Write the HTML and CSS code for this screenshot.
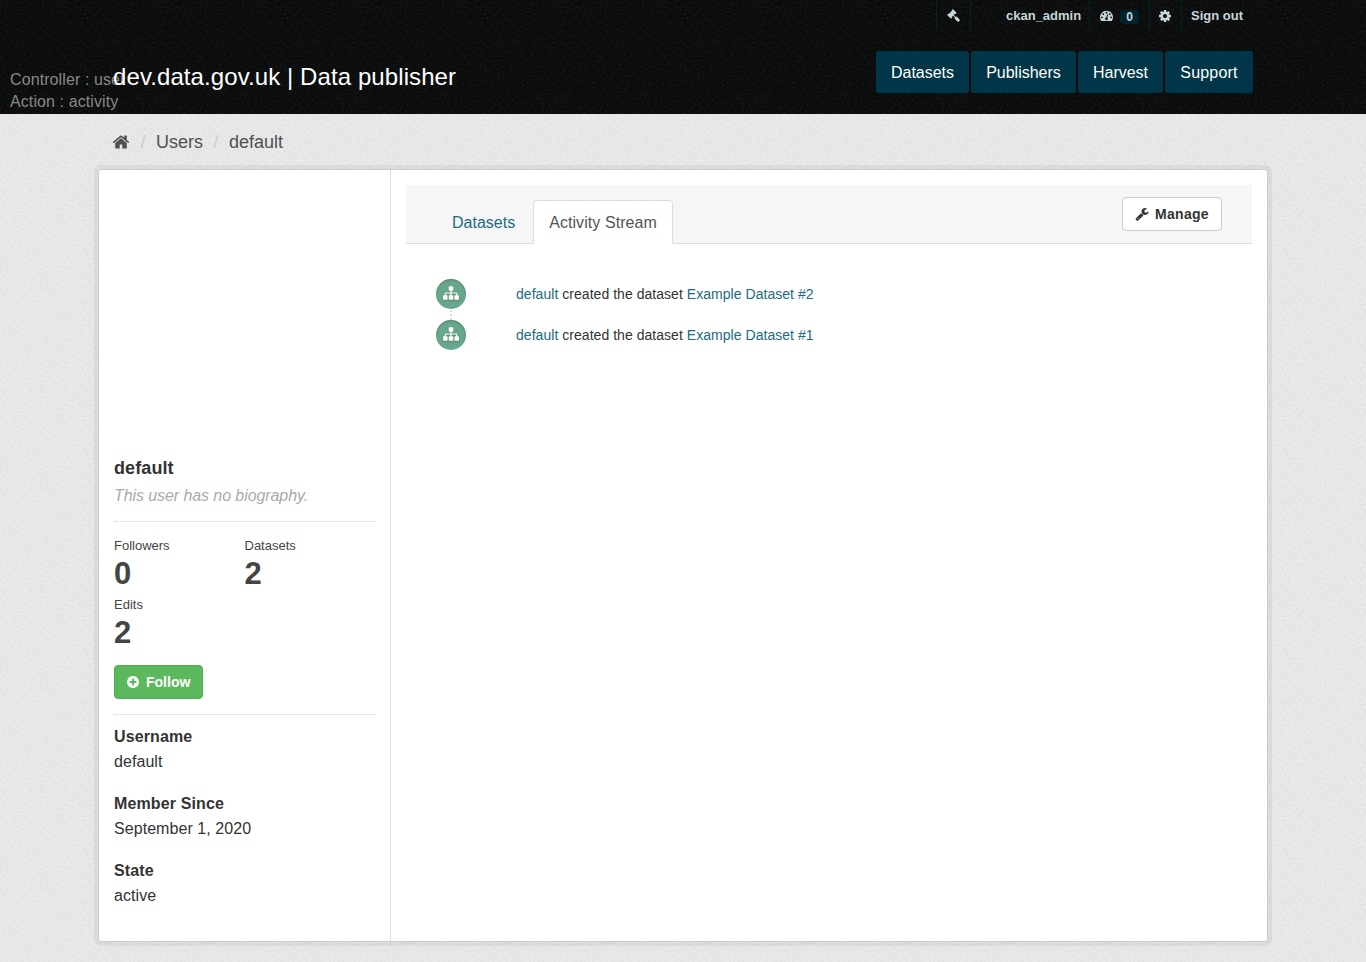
FILE: index.html
```
<!DOCTYPE html>
<html lang="en">
<head>
<meta charset="utf-8">
<title>default - Users - Data publisher</title>
<link rel="stylesheet" href="styles.css">
</head>
<body>
<svg class="sprite" width="0" height="0">
  <symbol id="home" viewBox="0 0 1792 1792"><path d="M1472 992v480q0 26-19 45t-45 19h-384v-384h-256v384h-384q-26 0-45-19t-19-45v-480q0-1 .5-3t.5-3l575-474 575 474q1 2 1 6zm223-69l-62 74q-8 9-21 11h-3q-13 0-21-7l-692-577-692 577q-12 8-24 7-13-2-21-11l-62-74q-8-10-7-23.500t11-21.500l719-599q32-26 76-26t76 26l244 204v-195q0-14 9-23t23-9h192q14 0 23 9t9 23v408l219 182q10 8 11 21.500t-7 23.500z"/></symbol>
  <symbol id="plus" viewBox="0 0 1792 1792"><path d="M1344 960v-128q0-26-19-45t-45-19h-256v-256q0-26-19-45t-45-19h-128q-26 0-45 19t-19 45v256h-256q-26 0-45 19t-19 45v128q0 26 19 45t45 19h256v256q0 26 19 45t45 19h128q26 0 45-19t19-45v-256h256q26 0 45-19t19-45zm320-64q0 209-103 385.500t-279.500 279.500-385.500 103-385.500-103-279.500-279.500-103-385.500 103-385.500 279.500-279.500 385.500-103 385.500 103 279.500 279.500 103 385.500z"/></symbol>
  <symbol id="cog" viewBox="0 0 1792 1792"><path d="M1152 896q0-106-75-181t-181-75-181 75-75 181 75 181 181 75 181-75 75-181zm512-109v222q0 12-8 23t-20 13l-185 28q-19 54-39 91 35 50 107 138 10 12 10 25t-9 23q-27 37-99 108t-94 71q-12 0-26-9l-138-108q-44 23-91 38-16 136-29 186-7 28-36 28h-222q-14 0-24.500-8.500t-11.500-21.500l-28-184q-49-16-90-37l-141 107q-10 9-25 9-14 0-25-11-126-114-165-168-7-10-7-23 0-12 8-23 15-21 51-66.500t54-70.500q-27-50-41-99l-183-27q-13-2-21-12.500t-8-23.500v-222q0-12 8-23t19-13l186-28q14-46 39-92-40-57-107-138-10-12-10-24 0-10 9-23 26-36 98.500-107.500t94.500-71.500q13 0 26 10l138 107q44-23 91-38 16-136 29-186 7-28 36-28h222q14 0 24.500 8.500t11.500 21.500l28 184q49 16 90 37l142-107q9-9 24-9 13 0 25 10 129 119 165 170 7 8 7 22 0 12-8 23-15 21-51 66.500t-54 70.500q26 50 41 98l183 28q13 2 21 12.500t8 23.500z"/></symbol>
  <symbol id="wrench" viewBox="0 0 1792 1792"><path d="M448 1472q0-26-19-45t-45-19-45 19-19 45 19 45 45 19 45-19 19-45zm644-420l-682 682q-37 37-90 37-52 0-91-37l-106-108q-38-36-38-90 0-53 38-91l681-681q39 98 114.500 173.500t173.500 114.500zm634-435q0 39-23 106-47 134-164.500 217.500t-258.500 83.500q-185 0-316.500-131.500t-131.500-316.500 131.500-316.500 316.500-131.500q58 0 121.500 16.500t107.500 46.500q16 11 16 28t-16 28l-293 169v224l193 107q5-3 79-48.500t135.500-81 70.500-35.500q15 0 23.500 10t8.500 25z"/></symbol>
  <symbol id="sitemap" viewBox="0 0 1792 1792"><path d="M1792 1248v320q0 40-28 68t-68 28h-320q-40 0-68-28t-28-68v-320q0-40 28-68t68-28h96v-192h-512v192h96q40 0 68 28t28 68v320q0 40-28 68t-68 28h-320q-40 0-68-28t-28-68v-320q0-40 28-68t68-28h96v-192h-512v192h96q40 0 68 28t28 68v320q0 40-28 68t-68 28h-320q-40 0-68-28t-28-68v-320q0-40 28-68t68-28h96v-192q0-52 38-90t90-38h512v-192h-96q-40 0-68-28t-28-68v-320q0-40 28-68t68-28h320q40 0 68 28t28 68v320q0 40-28 68t-68 28h-96v192h512q52 0 90 38t38 90v192h96q40 0 68 28t28 68z"/></symbol>
  <symbol id="dashboard" viewBox="0 0 1792 1792"><path d="M384 1152q0-53-37.500-90.500t-90.500-37.500-90.500 37.500-37.500 90.500 37.500 90.500 90.500 37.500 90.500-37.500 37.500-90.500zm192-448q0-53-37.500-90.500t-90.500-37.500-90.500 37.500-37.500 90.500 37.500 90.500 90.500 37.500 90.500-37.500 37.500-90.500zm428 481l101-382q6-26-7.500-48.500t-38.500-29.500-48 6.500-30 39.500l-101 382q-60 5-107 43.500t-63 98.500q-20 77 20 146t117 89 146-20 89-117q16-60-6-117t-72-91zm660-33q0-53-37.500-90.500t-90.500-37.500-90.500 37.500-37.500 90.500 37.500 90.500 90.500 37.500 90.500-37.500 37.500-90.500zm-640-640q0-53-37.500-90.500t-90.500-37.500-90.500 37.500-37.500 90.500 37.500 90.500 90.500 37.500 90.500-37.500 37.500-90.500zm448 192q0-53-37.500-90.500t-90.500-37.500-90.500 37.500-37.500 90.500 37.500 90.500 90.500 37.500 90.500-37.500 37.500-90.500zm320 448q0 261-141 483-19 29-54 29h-1402q-35 0-54-29-141-221-141-483 0-182 71-348t191-286 286-191 348-71 348 71 286 191 191 286 71 348z"/></symbol>
  <symbol id="gavel" viewBox="0 0 1792 1792"><path d="M1771 1536q0 53-37 90l-107 108q-39 37-91 37-53 0-90-37l-363-364q-38-36-38-90 0-53 43-96l-256-256-126 126q-14 14-34 14t-34-14q2 2 12.500 12t12.500 13 10 11.500 10 13.500 6 13.500 5.500 16.500 1.500 18q0 38-28 68-3 3-16.500 18t-19 20.500-18.500 16.500-22 15.500-22 9-26 4.500q-40 0-68-28l-408-408q-28-28-28-68 0-13 4.500-26t9-22 15.500-22 16.500-18.500 20.500-19 18-16.500q30-28 68-28 10 0 18 1.500t16.500 5.500 13.500 6 13.500 10 11.500 10 13 12.500 12 12.500q-14-14-14-34t14-34l348-348q14-14 34-14t34 14q-2-2-12.500-12t-12.500-13-10-11.500-10-13.500-6-13.500-5.500-16.500-1.500-18q0-38 28-68 3-3 16.500-18t19-20.500 18.500-16.500 22-15.500 22-9 26-4.500q40 0 68 28l408 408q28 28 28 68 0 13-4.500 26t-9 22-15.500 22-16.500 18.500-20.500 19-18 16.500q-30 28-68 28-10 0-18-1.500t-16.500-5.500-13.500-6-13.500-10-11.500-10-13-12.500-12-12.500q14 14 14 34t-14 34l-126 126 256 256q43-43 96-43 52 0 91 37l363 363q37 39 37 91z"/></symbol>
</svg>

<header class="masthead">
  <div class="debug">Controller : user<br>Action : activity</div>
  <div class="container">
    <ul class="account">
      <li class="acc-admin"><svg class="icon"><use href="#gavel"/></svg></li>
      <li class="acc-user">ckan_admin</li>
      <li class="acc-dash"><svg class="icon"><use href="#dashboard"/></svg><span class="badge">0</span></li>
      <li class="acc-cog"><svg class="icon"><use href="#cog"/></svg></li>
      <li class="acc-out">Sign out</li>
    </ul>
    <div class="brand-row">
      <h1 class="brand">dev.data.gov.uk | Data publisher</h1>
      <nav class="nav">
        <a class="nav-datasets">Datasets</a>
        <a class="nav-publishers">Publishers</a>
        <a class="nav-harvest">Harvest</a>
        <a class="nav-support">Support</a>
      </nav>
    </div>
  </div>
</header>

<main class="container">
  <div class="breadcrumb">
    <svg class="icon"><use href="#home"/></svg><span class="sep">/</span><a>Users</a><span class="sep">/</span><a>default</a>
  </div>
  <div class="wrapper">
    <aside class="sidebar">
      <div class="avatar"></div>
      <h2 class="name">default</h2>
      <p class="bio">This user has no biography.</p>
      <div class="stats">
        <dl><dt>Followers</dt><dd>0</dd></dl>
        <dl><dt>Datasets</dt><dd>2</dd></dl>
        <dl><dt>Edits</dt><dd>2</dd></dl>
      </div>
      <a class="btn follow"><svg class="icon"><use href="#plus"/></svg><span>Follow</span></a>
      <div class="info">
        <dl><dt>Username</dt><dd>default</dd></dl>
        <dl><dt>Member Since</dt><dd>September 1, 2020</dd></dl>
        <dl><dt>State</dt><dd>active</dd></dl>
      </div>
    </aside>
    <section class="primary">
      <div class="page-header">
        <div class="tabs"><a class="tab">Datasets</a><a class="tab active">Activity Stream</a></div>
        <a class="btn manage"><svg class="icon"><use href="#wrench"/></svg><span>Manage</span></a>
      </div>
      <ul class="activity">
        <li><span class="dot"><svg class="icon"><use href="#sitemap"/></svg></span><p><a>default</a> created the dataset <a>Example Dataset #2</a></p></li>
        <li><span class="dot"><svg class="icon"><use href="#sitemap"/></svg></span><p><a>default</a> created the dataset <a>Example Dataset #1</a></p></li>
      </ul>
    </section>
  </div>
</main>
</body>
</html>
```
FILE: styles.css
```
* { box-sizing: border-box; }
body, h1, h2, p, ul, dl, dd { margin: 0; padding: 0; }
ul { list-style: none; }
.sprite { display: block; }
.icon { display: block; fill: currentColor; flex: none; }

body {
  height: 962px;
  overflow: hidden;
  font: 16px/22px "Liberation Sans", Arial, sans-serif;
  color: #333;
  background: #e3e3e3 url("data:image/svg+xml,%3Csvg xmlns='http://www.w3.org/2000/svg' width='100' height='100'%3E%3Cfilter id='n'%3E%3CfeTurbulence type='fractalNoise' baseFrequency='.45' numOctaves='2' stitchTiles='stitch'/%3E%3CfeColorMatrix values='0 0 0 0 1 0 0 0 0 1 0 0 0 0 1 .8 0 0 0 -.28'/%3E%3C/filter%3E%3Crect width='100' height='100' filter='url(%23n)'/%3E%3C/svg%3E");
}
.container { width: 1170px; margin: 0 auto; }

.masthead {
  position: relative;
  height: 114px;
  background: #0a0b0b url("data:image/svg+xml,%3Csvg xmlns='http://www.w3.org/2000/svg' width='100' height='100'%3E%3Cfilter id='n'%3E%3CfeTurbulence type='fractalNoise' baseFrequency='.45' numOctaves='2' stitchTiles='stitch'/%3E%3CfeColorMatrix values='0 0 0 0 1 0 0 0 0 1 0 0 0 0 1 .12 0 0 0 -.05'/%3E%3C/filter%3E%3Crect width='100' height='100' filter='url(%23n)'/%3E%3C/svg%3E");
}
.debug { position: absolute; left: 10px; top: 69px; color: #888; letter-spacing: .1px; }
.masthead .container { position: relative; padding: 0 15px; }

.account {
  display: flex;
  justify-content: flex-end;
  height: 31px;
  font-size: 13px;
  font-weight: bold;
  line-height: 31px;
  color: #c6d7db;
}
.account li { display: flex; align-items: center; border-left: 1px solid #00232e; }
.account .icon { width: 13px; height: 13px; }
.acc-admin { width: 34px; padding-left: 10px; }
.acc-user { width: 119px; padding-left: 35px; }
.acc-dash { width: 60px; padding-left: 10px; }
.acc-cog { width: 32px; padding-left: 8px; }
.account .acc-cog .icon { width: 14px; height: 14px; }
.acc-out { width: 72px; padding-left: 9px; }
.badge {
  margin: 2px 0 0 7px;
  width: 19px;
  height: 14px;
  border-radius: 4px;
  background: #00232e;
  font-size: 12px;
  line-height: 14px;
  text-align: center;
}

.brand-row { display: flex; justify-content: space-between; padding-top: 20px; }
.brand { padding-top: 11px; font-size: 24px; line-height: 30px; font-weight: normal; color: #fff; white-space: nowrap; letter-spacing: .09px; }
.nav { display: flex; gap: 2px; }
.nav a { height: 42px; border-radius: 3px; background: #003647; color: #fff; line-height: 43px; text-align: center; }
.nav-datasets { width: 93px; }
.nav-publishers { width: 105px; }
.nav-harvest { width: 85px; }
.nav .nav-support { width: 88px; letter-spacing: .2px; }

.breadcrumb { display: flex; align-items: center; height: 55px; padding-left: 14px; font-size: 18px; color: #505050; }
.breadcrumb .icon { width: 18px; height: 18px; }
.sep { width: 26px; text-align: center; color: #ccc; }

.wrapper {
  display: flex;
  height: 773px;
  border: 1px solid #ccc;
  border-radius: 3px;
  background: #fff;
  box-shadow: 0 0 0 4px rgba(0, 0, 0, .05);
}
.sidebar { width: 292px; padding: 0 15px; border-right: 1px solid #ddd; }
.avatar { height: 287px; }
.name { font-size: 18px; line-height: 22px; letter-spacing: .1px; }
.bio { height: 43px; padding-top: 6px; font-style: italic; color: #aaa; border-bottom: 1px dotted #ccc; line-height: 22px; letter-spacing: -.08px; }
.stats { display: grid; grid-template-columns: 1fr 1fr; padding-top: 14px; color: #444; }
.stats dl { height: 59px; }
.stats dt { font-size: 13px; line-height: 20px; }
.stats dd { font-size: 31px; line-height: 36px; font-weight: bold; }
.btn { display: flex; align-items: center; height: 34px; border: 1px solid #ccc; border-radius: 4px; padding-left: 12px; font-size: 14px; font-weight: bold; letter-spacing: .3px; }
.btn .icon { width: 14px; height: 14px; margin-right: 6px; }
.follow { width: 89px; margin-top: 11px; padding-left: 11px; border-color: #4cae4c; background: #5cb85c; color: #fff; letter-spacing: 0; }
.info { margin-top: 15px; padding-top: 9px; border-top: 1px dotted #ccc; letter-spacing: .06px; }
.info dl { height: 67px; line-height: 25px; }
.info dt { font-weight: bold; letter-spacing: .12px; }

.primary { flex: 1; padding: 15px 15px 0; }
.page-header { display: flex; justify-content: space-between; height: 59px; padding: 12px 30px 0; background: #f6f6f6; border-bottom: 1px solid #ddd; }
.tabs { display: flex; padding-top: 3px; }
.tab { height: 44px; padding: 0 15px; border: 1px solid transparent; line-height: 43px; color: #206b82; }
.tab.active { margin-left: 2px; border-color: #ddd #ddd #fff; border-radius: 4px 4px 0 0; background: #fff; color: #555; letter-spacing: .07px; }
.manage { width: 100px; background: #fff; }
.activity { padding: 35px 30px 0; font-size: 14px; }
.activity li { position: relative; display: flex; align-items: center; height: 30px; margin-bottom: 11px; }
.activity li:first-child::after { content: ""; position: absolute; left: 14px; top: 31px; height: 10px; border-left: 2px dotted #ddd; }
.activity a { color: #206b82; }
.activity p { white-space: nowrap; letter-spacing: .04px; }
.dot { display: flex; align-items: center; justify-content: center; width: 30px; height: 30px; margin-right: 50px; border-radius: 50%; background: #67a78c; color: #fff; box-shadow: inset 0 1px 2px rgba(0, 0, 0, .25); }
.dot .icon { width: 16px; height: 16px; margin-bottom: 2px; filter: drop-shadow(0 1px 1px rgba(0, 0, 0, .2)); }
```
